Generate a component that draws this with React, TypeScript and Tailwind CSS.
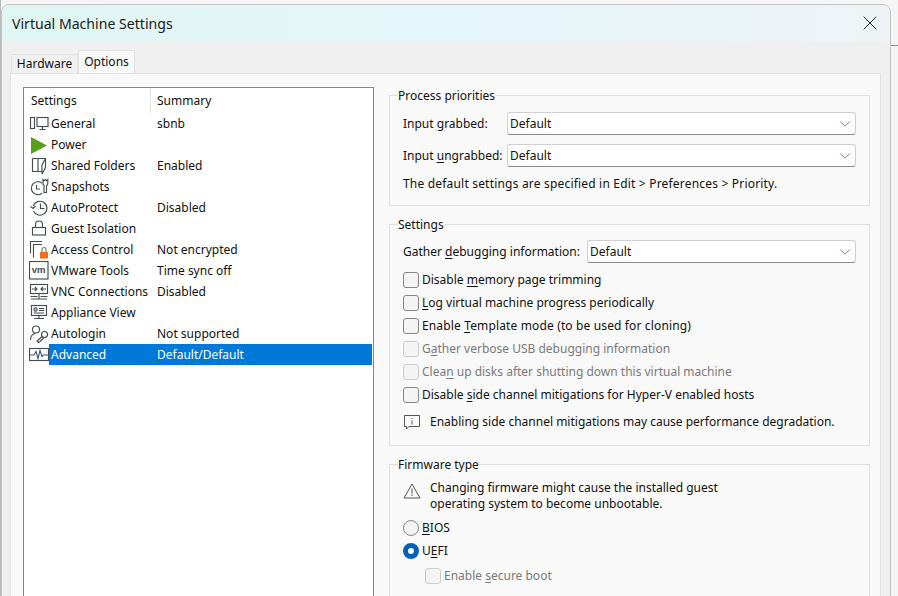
import type { ReactNode } from 'react'
import { ChevronDown, X } from 'lucide-react'

const S = { fill: 'none', stroke: '#474c52', strokeWidth: 1.15 }

const icons: Record<string, ReactNode> = {
  general: (
    <g {...S}>
      <rect x="1.500" y="3.500" width="4" height="11" />
      <rect x="8" y="3.500" width="11" height="9" />
      <path d="M13.500 12.500v2.500M10.500 15.500h6" />
    </g>
  ),
  power: <path d="M2 2 L18 10.500 L2 19 Z" fill="#57a01a" />,
  folders: (
    <g {...S}>
      <path d="M3.500 2.500h13v9l-3.500 6.500V9l3.500-6.500" />
      <path d="M3.500 2.500v13H13M9 2.500v13" />
    </g>
  ),
  snapshots: (
    <g {...S}>
      <path d="M13 6.200a6.500 6.500 0 1 0 0 10" />
      <path d="M7.500 8v4h3.500" />
      <path d="M15 8.500v7h2.500v-7a2.600 2.600 0 0 0 1.300-2.500V2.500l-1.300 1.200-1.300-1.200L15 3.700l-1-1.200V6a2.600 2.600 0 0 0 1 2.500Z" />
    </g>
  ),
  autoprotect: (
    <g {...S}>
      <path d="M4.300 8a7 7 0 1 1 .200 5" />
      <path d="M1.500 8.500l2.700 2 2.300-2.500M11.500 5.500v5h4" />
    </g>
  ),
  lock: (
    <g {...S}>
      <rect x="3.500" y="8.500" width="13" height="7.500" />
      <path d="M6.500 8.500V5.500a3.500 3.500 0 0 1 7 0v3" />
    </g>
  ),
  access: (
    <g>
      <g {...S}>
        <path d="M13 1.500H1.500v12" />
        <path d="M4.500 17.500v-13H13" />
      </g>
      <rect x="11" y="12" width="8" height="6.500" fill="#f26b21" />
      <path d="M13 12V9.500a2 2 0 0 1 4 0V12" fill="none" stroke="#7a7a7a" strokeWidth="1.200" />
    </g>
  ),
  tools: (
    <g>
      <rect x="0.500" y="0.500" width="18.500" height="17.500" fill="#fff" stroke="#474c52" strokeWidth="1.150" />
      <text x="9.700" y="12" fontSize="9.500" fontWeight="700" textAnchor="middle" fill="#474c52" fontFamily="Liberation Sans, sans-serif">vm</text>
    </g>
  ),
  vnc: (
    <g {...S}>
      <rect x="1.500" y="2.500" width="17" height="9" />
      <path d="M3 7h5M12 7h5M6 5l2 2-2 2M14 5l-2 2 2 2M10 11.500v5M1.500 14.500h7M11.500 14.500h7M2 17h16" />
    </g>
  ),
  appliance: (
    <g {...S}>
      <rect x="2.500" y="2.500" width="15" height="10" />
      <circle cx="6.500" cy="6.500" r="1.600" />
      <path d="M10 5.500h5M10 7.500h5M5 10h10M10 12.500v3M5 15.500h10" />
    </g>
  ),
  autologin: (
    <g {...S}>
      <circle cx="7" cy="5.500" r="3.500" />
      <path d="M1.500 16c0-3.500 2-6 5-6.500" />
      <circle cx="15.500" cy="10.500" r="3" />
      <path d="M13 12.500l-5 4.500 1.500 1.500 1.500-1 1-1 3-3" />
    </g>
  ),
  advanced: (
    <g>
      <rect x="0.500" y="3.500" width="19" height="12" fill="#fff" stroke="#474c52" strokeWidth="1.150" />
      <path d="M1 10h4l2-3.500 2 7 2-8 2 6 1.500-1.500H19" fill="none" stroke="#3e5a75" strokeWidth="1.150" />
    </g>
  ),
}

const rows = [
  { icon: 'general', name: 'General', summary: 'sbnb' },
  { icon: 'power', name: 'Power', summary: '' },
  { icon: 'folders', name: 'Shared Folders', summary: 'Enabled' },
  { icon: 'snapshots', name: 'Snapshots', summary: '' },
  { icon: 'autoprotect', name: 'AutoProtect', summary: 'Disabled' },
  { icon: 'lock', name: 'Guest Isolation', summary: '' },
  { icon: 'access', name: 'Access Control', summary: 'Not encrypted' },
  { icon: 'tools', name: 'VMware Tools', summary: 'Time sync off' },
  { icon: 'vnc', name: 'VNC Connections', summary: 'Disabled' },
  { icon: 'appliance', name: 'Appliance View', summary: '' },
  { icon: 'autologin', name: 'Autologin', summary: 'Not supported' },
  { icon: 'advanced', name: 'Advanced', summary: 'Default/Default', selected: true },
]

function SettingsList() {
  return (
    <div className="h-[520px] w-[351px] shrink-0 border border-[#82878c] bg-white">
      <div className="flex h-[25px] items-center pr-px">
        <div className="flex h-full w-[127px] items-center border-r border-[#e5e5e5] pl-[7px]">Settings</div>
        <div className="pl-[6px]">Summary</div>
      </div>
      {rows.map((row) => (
        <div key={row.name} className="flex h-[21px] items-center pl-[5px] pr-px">
          <svg width="20" height="20" viewBox="0 0 20 20" className="shrink-0">
            {icons[row.icon]}
          </svg>
          <div
            className={`flex h-full flex-1 items-center pl-[2px] ${row.selected ? 'bg-[#0078d7] text-white' : ''}`}
          >
            <span className="w-[106px] whitespace-nowrap">{row.name}</span>
            <span className="whitespace-nowrap">{row.summary}</span>
          </div>
        </div>
      ))}
    </div>
  )
}

function Group({ title, className, children }: { title: string; className: string; children: ReactNode }) {
  return (
    <fieldset className={`shrink-0 border border-[#dfdfdf] pl-[13px] pr-[13px] ${className}`}>
      <legend className="-ml-[5px] h-[16px] leading-[18px]">{title}</legend>
      {children}
    </fieldset>
  )
}

function Select({ className }: { className: string }) {
  return (
    <div
      className={`flex h-[23px] items-center justify-between rounded-[3px] border border-[#d0d0d0] border-b-[#8b8b8b] bg-white pl-[2px] pr-px ${className}`}
    >
      Default
      <ChevronDown size={18} strokeWidth={0.9} color="#444" />
    </div>
  )
}

function Check({ disabled, children }: { disabled?: boolean; children: ReactNode }) {
  return (
    <div className={`flex h-[23px] items-center gap-[3px] ${disabled ? 'text-[#7a7a7a]' : ''}`}>
      <span
        className={`h-[16px] w-[16px] rounded-[3px] border bg-[#f4f4f4] ${disabled ? 'border-[#cccccc]' : 'border-[#858585]'}`}
      />
      <span className="whitespace-nowrap">{children}</span>
    </div>
  )
}

export default function App() {
  return (
    <div className="flex h-[596px] w-[898px] overflow-hidden bg-[#f5f5f5] font-['Noto_Sans',sans-serif] text-[12px] leading-[16px] text-[#111]">
      <div className="w-[1px] shrink-0 bg-[#b9b9b9]" />
      <div className="mt-[4px] h-[620px] w-[890px] shrink-0 overflow-hidden rounded-t-[8px] border border-[#c4c4c4] bg-[#f0f0f0]">
        <div className="flex h-[36px] items-center justify-between bg-gradient-to-r from-[#e0f6f3] via-[#e4f6fa] to-[#eff3f6] pl-[10px] pr-[8px]">
          <span className="mt-[2px] text-[14.100px] text-[#1a1a1a]">Virtual Machine Settings</span>
          <X size={24} strokeWidth={0.9} color="#111" />
        </div>
        <div className="ml-[9px] mt-[9px] flex h-[23px] items-end">
          <div className="flex h-[19px] w-[67px] items-center justify-center border border-b-0 border-[#e2e2e2]">Hardware</div>
          <div className="flex h-[23px] w-[57px] items-start justify-center border border-b-0 border-[#e2e2e2] bg-[#f9f9f9] pt-[3px]">Options</div>
        </div>
        <div className="ml-[8px] flex h-[560px] w-[871px] gap-[15px] border border-[#e2e2e2] bg-[#f9f9f9] pl-[12px] pt-[13px]">
          <SettingsList />
          <div className="flex w-[481px] flex-col gap-[10px]">
            <Group title="Process priorities" className="h-[119px]">
              <div className="mt-[9px] flex flex-col gap-[9px]">
                <div className="flex items-center">
                  <span className="w-[104px]">Input <u className="underline-offset-2">g</u>rabbed:</span>
                  <Select className="flex-1" />
                </div>
                <div className="flex items-center">
                  <span className="w-[104px]">Input <u className="underline-offset-2">u</u>ngrabbed:</span>
                  <Select className="flex-1" />
                </div>
              </div>
              <p className="mt-[9px] tracking-[0.19px]">The default settings are specified in Edit &gt; Preferences &gt; Priority.</p>
            </Group>
            <Group title="Settings" className="h-[230px]">
              <div className="mt-[8px] flex items-center">
                <span className="w-[184px]">Gather <u className="underline-offset-2">d</u>ebugging information:</span>
                <Select className="flex-1" />
              </div>
              <div className="mt-[5px]">
                <Check>Disable <u className="underline-offset-2">m</u>emory page trimming</Check>
                <Check><u className="underline-offset-2">L</u>og virtual machine progress periodically</Check>
                <Check><span className="tracking-[0.14px]">Enable <u className="underline-offset-2">T</u>emplate mode (to be used for cloning)</span></Check>
                <Check disabled>G<u className="underline-offset-2">a</u>ther verbose USB debugging information</Check>
                <Check disabled>Clea<u className="underline-offset-2">n</u> up disks after shutting down this virtual machine</Check>
                <Check>Disable <u className="underline-offset-2">s</u>ide channel mitigations for Hyper-V enabled hosts</Check>
              </div>
              <div className="mt-[7px] flex items-center gap-[9px]">
                <svg width="18" height="18" viewBox="0 0 18 18" fill="none" stroke="#555">
                  <path d="M1.500 2.500h15v11H6l-2.500 2.500v-2.500h-2z" />
                  <path d="M9 5v1M9 7.500v4" />
                </svg>
                <span className="whitespace-nowrap">Enabling side channel mitigations may cause performance degradation.</span>
              </div>
            </Group>
            <Group title="Firmware type" className="h-[200px]">
              <div className="mt-[8px] flex gap-[9px]">
                <svg width="18" height="18" viewBox="0 0 18 18" fill="none" stroke="#555" className="mt-[2px] shrink-0">
                  <path d="M9 2 17 16H1z" />
                  <path d="M9 6.500v5M9 12.500v1.500" />
                </svg>
                <p>Changing firmware might cause the installed guest<br />operating system to become unbootable.</p>
              </div>
              <div className="mt-[4px] flex h-[23px] items-center gap-[3px]">
                <span className="h-[16px] w-[16px] rounded-full border border-[#858585] bg-[#f4f4f4]" />
                <span><u className="underline-offset-2">B</u>IOS</span>
              </div>
              <div className="flex h-[23px] items-center gap-[3px]">
                <span className="h-[16px] w-[16px] rounded-full border-[5px] border-[#005fb8] bg-white" />
                <span>U<u className="underline-offset-2">E</u>FI</span>
              </div>
              <div className="ml-[22px] mt-[2px]">
                <Check disabled>Enable <u className="underline-offset-2">s</u>ecure boot</Check>
              </div>
            </Group>
          </div>
        </div>
      </div>
      <div className="mt-[45px] flex-1 border-t border-[#8a8a8a]" />
    </div>
  )
}
